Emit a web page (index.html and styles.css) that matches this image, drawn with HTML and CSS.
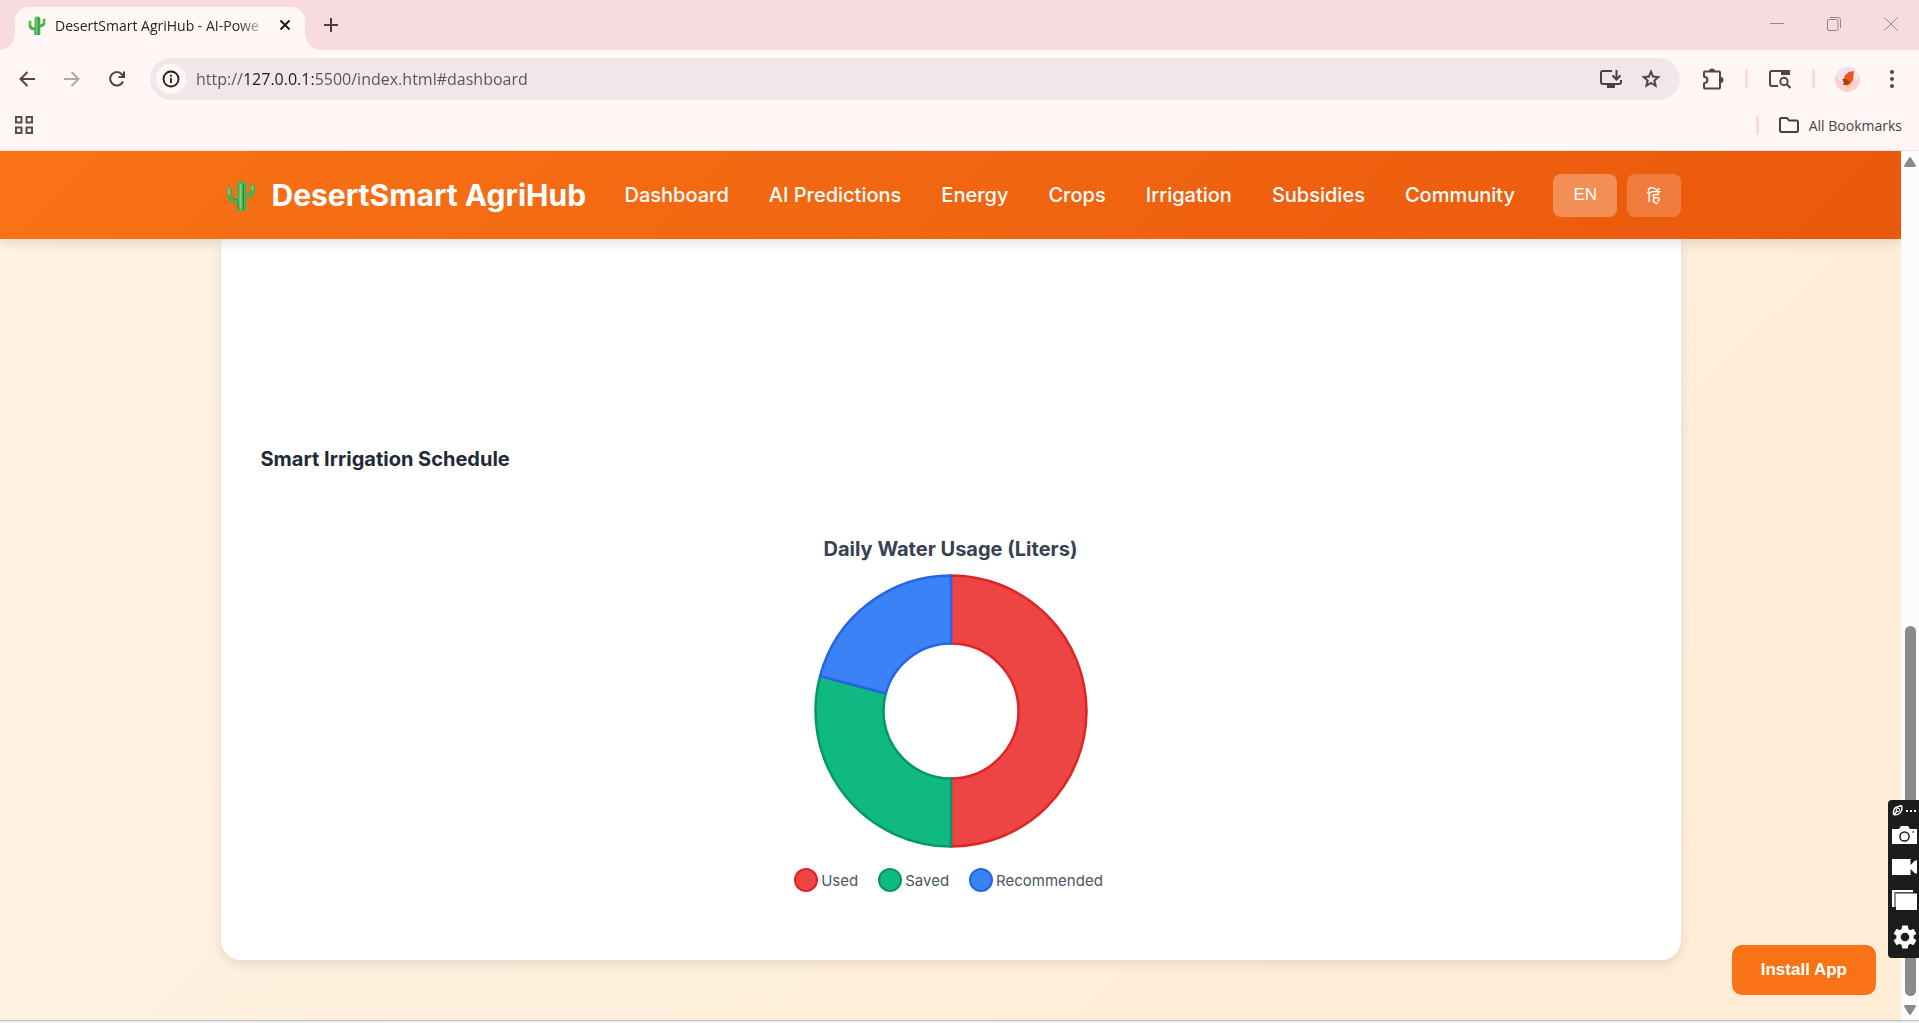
FILE: index.html
```html
<!DOCTYPE html>
<html lang="en">
<head>
    <meta charset="UTF-8">
    <meta name="viewport" content="width=device-width, initial-scale=1.0">
    <title>DesertSmart AgriHub</title>
    <link rel="stylesheet" href="styles.css">
</head>
<body>
    <!-- Shared cactus drawing -->
    <svg class="sprite" aria-hidden="true">
        <symbol id="cactus" viewBox="0 0 28 31">
            <path d="M10 31V5.500a4.500 4.500 0 0 1 9.500 0V31z" fill="#4caf50"/>
            <path d="M2.500 9.500V15q0 6.500 9 6.500M25.500 6.500V11q0 5-7 5" fill="none" stroke="#4caf50" stroke-width="4.600" stroke-linecap="round"/>
            <path d="M2 9.500V14M25.500 6.500V10M13.500 5V28" fill="none" stroke="#7ed37c" stroke-width="1.800" stroke-linecap="round"/>
            <path d="M16.500 4V30M5 17q2 3 6 3M11 23V30" fill="none" stroke="#2f8540" stroke-width="1"/>
        </symbol>
    </svg>

    <div class="tab-strip">
        <div class="tab">
            <svg class="favicon"><use href="#cactus"/></svg>
            <span class="tab-title">DesertSmart AgriHub - AI-Powe</span>
            <button class="icon-btn tab-close" aria-label="Close tab">
                <svg width="12" height="12" viewBox="0 0 12 12"><path d="M1.500 1.500l9 9M10.500 1.500l-9 9" stroke="#1f1a1b" stroke-width="2"/></svg>
            </button>
        </div>
        <button class="icon-btn new-tab" aria-label="New tab">
            <svg width="14" height="14" viewBox="0 0 14 14"><path d="M7 0v14M0 7h14" stroke="#4a3f41" stroke-width="2"/></svg>
        </button>
        <div class="window-controls">
            <button class="window-btn" aria-label="Minimize">
                <svg width="14" height="14" viewBox="0 0 14 14"><path d="M0 6.500h14" stroke="#94868a"/></svg>
            </button>
            <button class="window-btn" aria-label="Restore">
                <svg width="14" height="14" viewBox="0 0 14 14" fill="none" stroke="#94868a"><rect x="0.500" y="2.500" width="10.500" height="11" rx="1.500"/><path d="M3 .5h8q2.500 0 2.500 2.500v8"/></svg>
            </button>
            <button class="window-btn" aria-label="Close">
                <svg width="14" height="14" viewBox="0 0 14 14"><path d="M.5.5l13 13M13.500.5l-13 13" stroke="#94868a"/></svg>
            </button>
        </div>
    </div>

    <div class="toolbar">
        <button class="icon-btn" aria-label="Back">
            <svg width="16" height="16" viewBox="0 0 16 16" fill="none" stroke="#5b3f44" stroke-width="2"><path d="M16 8H1.500M8.500 1L1.500 8l7 7"/></svg>
        </button>
        <button class="icon-btn" aria-label="Forward">
            <svg width="16" height="16" viewBox="0 0 16 16" fill="none" stroke="#b3a6a8" stroke-width="2"><path d="M0 8h14.500M7.500 1l7 7-7 7"/></svg>
        </button>
        <button class="icon-btn" aria-label="Reload">
            <svg width="16" height="16" viewBox="0 0 16 16" fill="none" stroke="#5b3f44" stroke-width="2"><path d="M14 10.500A6.700 6.700 0 1 1 13 3.500L15 6M15 .5V6H9.500"/></svg>
        </button>
        <div class="omnibox">
            <button class="icon-btn site-info" aria-label="View site information">
                <svg width="18" height="18" viewBox="0 0 18 18"><circle cx="9" cy="9" r="7.500" fill="none" stroke="#1f1a1b" stroke-width="1.800"/><path d="M9 8v5M9 4.800v1.900" stroke="#1f1a1b" stroke-width="1.800"/></svg>
            </button>
            <input type="text" class="url" aria-label="Address" value="http://127.0.0.1:5500/index.html#dashboard">
            <button class="icon-btn" aria-label="Install page as app">
                <svg width="22" height="20" viewBox="0 0 22 20" fill="none" stroke="#4a3f41" stroke-width="2"><path d="M12 2H3q-2 0-2 2v9q0 2 2 2h16q2 0 2-2v-2"/><path d="M16.500 1v9M12.500 6.500l4 4 4-4"/><path d="M7 17.500h8" stroke-width="3"/></svg>
            </button>
            <button class="icon-btn" aria-label="Bookmark this tab">
                <svg width="22" height="22" viewBox="0 0 24 24" fill="#4a3f41"><path d="M22 9.240l-7.190-.62L12 2 9.190 8.630 2 9.240l5.460 4.730L5.820 21 12 17.270 18.180 21l-1.630-7.030L22 9.240zM12 15.400l-3.760 2.270 1-4.280-3.320-2.880 4.380-.38L12 6.100l1.710 4.040 4.380.38-3.320 2.880 1 4.280L12 15.400z" stroke="#4a3f41" stroke-width=".6"/></svg>
            </button>
        </div>
        <button class="icon-btn" aria-label="Extensions">
            <svg width="22" height="22" viewBox="0 0 22 22"><path d="M2 4.500q0-1 1-1h14q1 0 1 1v15q0 1-1 1H3q-1 0-1-1v-4q3.500-.8 3.500-3.500T2 8.500z" fill="none" stroke="#5b3f44" stroke-width="2"/><path d="M7 3.500a3 3 0 0 1 6 0zM18.500 9a3 3 0 0 1 0 6z" fill="#5b3f44"/></svg>
        </button>
        <span class="divider"></span>
        <button class="icon-btn" aria-label="Search this page">
            <svg width="22" height="20" viewBox="0 0 22 20" fill="none" stroke="#5b3f44" stroke-width="2"><path d="M9 17H3q-2 0-2-2V4q0-2 2-2h16q1 0 1 1v3"/><path d="M13 2h7v3h-7z" fill="#5b3f44"/><circle cx="15" cy="12.500" r="3.700"/><path d="M17.700 15.200l3.800 3.800"/></svg>
        </button>
        <span class="divider"></span>
        <button class="icon-btn" aria-label="Profile">
            <svg width="25" height="25" viewBox="0 0 25 25"><circle cx="12.500" cy="12.500" r="12.500" fill="#ffd0cf"/><path d="M1 8a12.500 12.500 0 0 1 23 0l-2 5-9-2-8 3z" fill="#f2e4ee"/><path d="M10 8l4-3 5-1-1 9-3 4-3 1-4-4z" fill="#ea5a1c"/><path d="M7 12l4 0 4 3-2 3-5 0 1-3z" fill="#ad3a16"/><path d="M11 18l4-1-2 4z" fill="#e8b456"/></svg>
        </button>
        <button class="icon-btn" aria-label="Menu">
            <svg width="4" height="18" viewBox="0 0 4 18" fill="#5b3f44"><circle cx="2" cy="2" r="2"/><circle cx="2" cy="9" r="2"/><circle cx="2" cy="16" r="2"/></svg>
        </button>
    </div>

    <div class="bookmarks-bar">
        <button class="icon-btn" aria-label="Tab groups">
            <svg width="18" height="18" viewBox="0 0 18 18" fill="none" stroke="#5a4c4e" stroke-width="2"><path d="M1 1h5.500v5.500H1zM11.500 1H17v5.500h-5.500zM1 11.500h5.500V17H1zM11.500 11.500H17V17h-5.500z"/></svg>
        </button>
        <span class="divider"></span>
        <button class="all-bookmarks">
            <svg width="20" height="16" viewBox="0 0 20 16" fill="none" stroke="#4a3f41" stroke-width="2"><path d="M1 2.500Q1 1 2.500 1H8l2 2.500h7.500Q19 3.500 19 5v8.500q0 1.500-1.500 1.500h-15Q1 15 1 13.500z"/></svg>
            All Bookmarks
        </button>
    </div>

    <div class="viewport">
        <div class="page">
            <header class="header">
                <div class="header-content">
                    <div class="logo">
                        <svg class="logo-icon"><use href="#cactus"/></svg>
                        <h1>DesertSmart AgriHub</h1>
                    </div>
                    <nav class="nav">
                        <a href="#dashboard">Dashboard</a>
                        <a href="#predictions">AI Predictions</a>
                        <a href="#energy">Energy</a>
                        <a href="#crops">Crops</a>
                        <a href="#irrigation">Irrigation</a>
                        <a href="#subsidies">Subsidies</a>
                        <a href="#community">Community</a>
                    </nav>
                    <div class="language-toggle">
                        <button class="lang-btn active">EN</button>
                        <button class="lang-btn" lang="hi">हिं</button>
                    </div>
                </div>
            </header>

            <main class="main">
                <section class="card">
                    <div class="prediction-area"></div>
                    <h2>Smart Irrigation Schedule</h2>
                    <div class="chart">
                        <h3>Daily Water Usage (Liters)</h3>
                        <svg class="donut" width="274" height="274" viewBox="-137 -137 274 274" role="img" aria-label="Used 50%, saved 29%, recommended 21%">
                            <path d="M0-135.500A135.500 135.500 0 0 1 0 135.500V67.500A67.500 67.500 0 0 0 0-67.500z" fill="#ef4444" stroke="#dc2626" stroke-width="2.500"/>
                            <path d="M0 135.500A135.500 135.500 0 0 1-130.900-35L-65.200-17.500A67.500 67.500 0 0 0 0 67.500z" fill="#10b981" stroke="#059669" stroke-width="2.500"/>
                            <path d="M-130.900-35A135.500 135.500 0 0 1 0-135.500V-67.500A67.500 67.500 0 0 0-65.200-17.500z" fill="#3b82f6" stroke="#2563eb" stroke-width="2.500"/>
                        </svg>
                        <ul class="legend">
                            <li><span class="dot used"></span>Used</li>
                            <li><span class="dot saved"></span>Saved</li>
                            <li><span class="dot recommended"></span>Recommended</li>
                        </ul>
                    </div>
                </section>
            </main>

            <button class="install-btn">Install App</button>
        </div>

        <div class="scrollbar">
            <svg width="12" height="10" viewBox="0 0 12 10"><path d="M6 1l5 8H1z" fill="#8a8a8a" stroke="#8a8a8a" stroke-width="2" stroke-linejoin="round"/></svg>
            <div class="scroll-track"><div class="scroll-thumb"></div></div>
            <svg width="12" height="10" viewBox="0 0 12 10"><path d="M6 9l5-8H1z" fill="#8a8a8a" stroke="#8a8a8a" stroke-width="2" stroke-linejoin="round"/></svg>
        </div>

        <!-- Floating capture tool -->
        <div class="capture-tool">
            <div class="capture-head">
                <svg width="11" height="11" viewBox="0 0 11 11" fill="none" stroke="#fff"><path d="M1.500 9.500Q1 3 5 2l4.500-1.500Q11 5 8 8 5 10.500 2 9.500L5 6" stroke-width="1.400"/><circle cx="6" cy="5" r="1.800"/></svg>
                <svg width="11" height="2" viewBox="0 0 11 2" fill="#fff"><path d="M0 0h2v2H0zM4 0h2v2H4zM8 0h2v2H8z"/></svg>
            </div>
            <button class="capture-btn" aria-label="Screenshot">
                <svg width="25" height="18" viewBox="0 0 25 18"><path d="M0 3h7l2-3h7l2 3h7v15H0z" fill="#fff"/><circle cx="12.500" cy="10.500" r="4.600" fill="none" stroke="#1c1c1c" stroke-width="1.500"/><path d="M20 6h2" stroke="#1c1c1c"/></svg>
            </button>
            <button class="capture-btn" aria-label="Record video">
                <svg width="25" height="16" viewBox="0 0 25 16" fill="#fff"><path d="M0 0h18.500v6L23 1.500h2v13h-2L18.500 10v6H0z"/></svg>
            </button>
            <button class="capture-btn" aria-label="Gallery">
                <svg width="25" height="20" viewBox="0 0 25 20" fill="#fff"><path d="M0 0h21v2H2.500v15H0zM4 3.500h21V20H4z"/><path d="M3.500 17V3H21" fill="none" stroke="#8a8a8a"/></svg>
            </button>
            <button class="capture-btn" aria-label="Settings">
                <svg width="24" height="24" viewBox="2 2 20 20" fill="#fff"><path d="M19.140 12.940c.04-.3.060-.61.060-.94 0-.32-.02-.64-.07-.94l2.030-1.580c.18-.14.230-.41.120-.61l-1.920-3.320c-.12-.22-.37-.29-.59-.22l-2.390.96c-.5-.38-1.030-.7-1.620-.94l-.36-2.540c-.04-.24-.24-.41-.48-.41h-3.840c-.24 0-.43.17-.47.410l-.36 2.540c-.59.240-1.130.57-1.620.94l-2.390-.96c-.22-.08-.47 0-.59.220L2.740 8.870c-.12.210-.08.470.12.610l2.030 1.580c-.05.300-.09.630-.09.940s.02.640.07.940l-2.030 1.580c-.18.140-.23.410-.12.610l1.920 3.320c.12.220.37.290.59.220l2.390-.96c.5.380 1.030.7 1.620.94l.36 2.540c.05.240.24.410.48.410h3.840c.24 0 .44-.17.470-.41l.36-2.540c.59-.24 1.130-.56 1.620-.94l2.390.96c.22.080.47 0 .59-.22l1.920-3.320c.12-.22.070-.47-.12-.61l-2.010-1.580zM12 15.600c-1.980 0-3.600-1.620-3.600-3.600s1.620-3.600 3.600-3.600 3.600 1.620 3.600 3.600-1.620 3.600-3.600 3.600z"/></svg>
            </button>
        </div>
    </div>

    <div class="screen-edge"></div>
</body>
</html>
```

FILE: styles.css
```css
* {
    box-sizing: border-box;
    margin: 0;
    padding: 0;
}

body {
    display: flex;
    flex-direction: column;
    height: 100vh;
    overflow: hidden;
    font-family: "Open Sans", "Noto Sans", sans-serif;
    background: #fff7f5;
}

button {
    border: none;
    background: none;
    cursor: pointer;
}

svg {
    display: block;
    flex-shrink: 0;
}

.sprite {
    position: absolute;
    width: 0;
    height: 0;
}

.icon-btn {
    display: flex;
    align-items: center;
    justify-content: center;
    flex-shrink: 0;
    width: 30px;
    height: 30px;
    border-radius: 15px;
}

.divider {
    width: 3px;
    height: 20px;
    margin: 0 2px;
    border-radius: 2px;
    background: #ffd8de;
}

/* Browser tabs */
.tab-strip {
    display: flex;
    height: 50px;
    padding-left: 15px;
    background: #f7dbdf;
}

.tab {
    position: relative;
    display: flex;
    align-items: center;
    width: 290px;
    margin-top: 7px;
    padding: 0 5px 7px 12px;
    border-radius: 14px 14px 0 0;
    background: #fff7f5;
}

    /* Curved feet of the tab */
    .tab::before,
    .tab::after {
        content: "";
        position: absolute;
        bottom: 0;
        width: 15px;
        height: 15px;
    }

    .tab::before {
        right: 100%;
        background: radial-gradient(circle at 0 0, #f7dbdf 14px, #fff7f5 15px);
    }

    .tab::after {
        left: 100%;
        background: radial-gradient(circle at 100% 0, #f7dbdf 14px, #fff7f5 15px);
    }

.favicon {
    width: 20px;
    height: 19px;
}

.tab-title {
    flex: 1;
    margin-left: 8px;
    overflow: hidden;
    white-space: nowrap;
    font-size: 14px;
    color: #2a2224;
    mask-image: linear-gradient(to right, #000 85%, transparent);
}

.new-tab {
    margin: 10px 0 0 11px;
}

.window-controls {
    display: flex;
    margin-left: auto;
}

.window-btn {
    display: flex;
    align-items: center;
    justify-content: center;
    width: 57px;
    height: 48px;
}

/* Address row */
.toolbar {
    display: flex;
    align-items: center;
    gap: 15px;
    height: 58px;
    padding: 0 12px;
}

.omnibox {
    display: flex;
    flex: 1;
    align-items: center;
    gap: 10px;
    height: 42px;
    margin: 0 3px;
    padding: 0 14px 0 6px;
    border-radius: 21px;
    background: #f2e6ea;
}

.site-info {
    background: #fff7f5;
}

/* The host part of the address is darker than the rest */
.url {
    flex: 1;
    border: none;
    outline: none;
    font-family: inherit;
    font-size: 16px;
    color: transparent;
    caret-color: #1f1a1b;
    background: linear-gradient(to right, #5f5054 49px, #1f1a1b 49px, #1f1a1b 118px, #5f5054 118px);
    background-clip: text;
}

.bookmarks-bar {
    display: flex;
    align-items: center;
    height: 43px;
    padding: 0 17px 8px 9px;
    border-bottom: 1px solid #f5dfe2;
}

    .bookmarks-bar .divider {
        margin-left: auto;
    }

.all-bookmarks {
    display: flex;
    align-items: center;
    gap: 10px;
    margin-left: 18px;
    font-family: inherit;
    font-size: 14px;
    color: #4a3f41;
}

/* Page area */
.viewport {
    position: relative;
    display: flex;
    flex: 1;
    min-height: 0;
}

.page {
    position: relative;
    flex: 1;
    overflow: hidden;
    font-family: Inter, sans-serif;
    background: linear-gradient(135deg, #fff3e4, #feecd5);
}

.header {
    position: relative;
    z-index: 1;
    background: linear-gradient(135deg, #f97316, #ea580c);
    box-shadow: 0 4px 12px rgba(0, 0, 0, 0.12);
}

.header-content {
    display: flex;
    align-items: center;
    justify-content: space-between;
    max-width: 1500px;
    min-height: 88px;
    margin: 0 auto;
    padding: 0 20px;
}

.logo {
    display: flex;
    align-items: center;
    gap: 17px;
    padding-left: 6px;
    color: #fff;
}

.logo-icon {
    width: 28px;
    height: 31px;
}

.logo h1 {
    font-size: 30px;
    font-weight: 700;
    white-space: nowrap;
}

.nav {
    display: flex;
    gap: 40px;
}

    .nav a {
        font-size: 20px;
        font-weight: 500;
        color: #fff;
        text-decoration: none;
        white-space: nowrap;
    }

.language-toggle {
    display: flex;
    gap: 10px;
}

.lang-btn {
    height: 43px;
    padding: 0 20px;
    border-radius: 8px;
    font-family: "Liberation Sans", "Noto Sans", sans-serif;
    font-size: 17px;
    color: #fff;
    background: rgba(255, 255, 255, 0.2);
}

    .lang-btn.active {
        background: rgba(255, 255, 255, 0.3);
    }

.main {
    max-width: 1500px;
    margin: 0 auto;
    padding: 0 20px 60px;
}

.card {
    padding: 0 40px 68px;
    border-radius: 0 0 20px 20px;
    background: #fff;
    box-shadow: 0 4px 12px rgba(0, 0, 0, 0.1);
}

    .card h2 {
        font-size: 20px;
        font-weight: 700;
        line-height: 24px;
        color: #1f2937;
    }

.prediction-area {
    height: 208px;
}

.chart {
    display: flex;
    flex-direction: column;
    align-items: center;
    padding-top: 65px;
}

    .chart h3 {
        font-size: 20px;
        font-weight: 700;
        line-height: 26px;
        color: #374151;
    }

.donut {
    margin: 12px 0 20px;
}

.legend {
    display: flex;
    gap: 20px;
    padding-right: 4px;
    list-style: none;
    font-size: 15px;
    color: #4b5563;
}

    .legend li {
        display: flex;
        align-items: center;
        gap: 3px;
    }

.dot {
    width: 24px;
    height: 24px;
    border: 2px solid;
    border-radius: 50%;
}

.used {
    background: #ef4444;
    border-color: #dc2626;
}

.saved {
    background: #10b981;
    border-color: #059669;
}

.recommended {
    background: #3b82f6;
    border-color: #2563eb;
}

.install-btn {
    position: absolute;
    right: 25px;
    bottom: 25px;
    height: 50px;
    padding: 0 29px;
    border-radius: 10px;
    font-family: "Liberation Sans", Arial, sans-serif;
    font-size: 17px;
    font-weight: 700;
    color: #fff;
    background: #f97316;
}

.scrollbar {
    display: flex;
    flex-direction: column;
    align-items: center;
    gap: 6px;
    width: 18px;
    padding: 6px 0 5px;
    background: #fcfcfc;
}

.scroll-track {
    display: flex;
    flex: 1;
    flex-direction: column;
    justify-content: flex-end;
    padding-bottom: 3px;
}

.scroll-thumb {
    width: 11px;
    height: 45%;
    border-radius: 6px;
    background: #8a8a8a;
}

.capture-tool {
    position: absolute;
    right: 0;
    bottom: 62px;
    display: flex;
    flex-direction: column;
    align-items: center;
    gap: 15px;
    width: 31px;
    padding: 5px 2px 9px 4px;
    border-radius: 4px 0 0 4px;
    background: #1c1c1c;
}

.capture-head {
    display: flex;
    align-items: center;
    gap: 3px;
    margin-bottom: -5px;
}

.screen-edge {
    height: 3px;
    border-top: 1px solid #bdbdc2;
    background: #eee;
}
```
